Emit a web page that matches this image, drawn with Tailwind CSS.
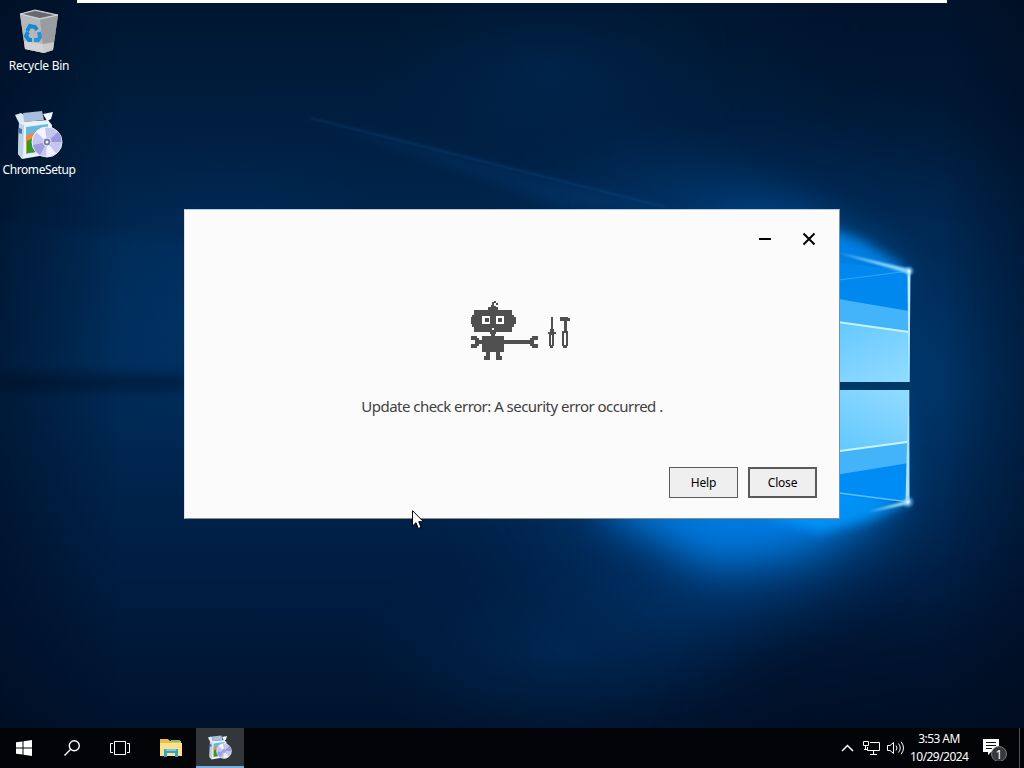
<!DOCTYPE html>
<html lang="en">
<head>
  <meta charset="UTF-8">
  <meta name="viewport" content="width=device-width, initial-scale=1.0">
  <title>Desktop</title>
  <script src="https://cdn.jsdelivr.net/npm/@tailwindcss/browser@4"></script>
</head>
<body class="overflow-hidden">
  <div class="relative flex flex-col w-[1024px] h-[768px] overflow-hidden bg-[#001533] font-['Noto_Sans','Open_Sans',sans-serif]">

    <!-- Wallpaper -->
    <svg class="absolute inset-0" width="1024" height="768" viewBox="0 0 1024 768" color-interpolation-filters="sRGB">
      <defs>
        <linearGradient id="base" x1="0" y1="0" x2="0" y2="1">
          <stop offset="0" stop-color="#001630"/>
          <stop offset=".25" stop-color="#002349"/>
          <stop offset=".5" stop-color="#002b57"/>
          <stop offset=".75" stop-color="#001d42"/>
          <stop offset="1" stop-color="#001027"/>
        </linearGradient>
        <radialGradient id="haze">
          <stop offset="0" stop-color="#0058a6" stop-opacity=".75"/>
          <stop offset=".5" stop-color="#004484" stop-opacity=".45"/>
          <stop offset="1" stop-color="#002a58" stop-opacity="0"/>
        </radialGradient>
        <linearGradient id="edge" x1="0" y1="0" x2="1" y2="0">
          <stop offset="0" stop-color="#000a1c" stop-opacity=".5"/>
          <stop offset=".12" stop-color="#000a1c" stop-opacity="0"/>
          <stop offset=".92" stop-color="#000a1c" stop-opacity="0"/>
          <stop offset="1" stop-color="#000a1c" stop-opacity=".4"/>
        </linearGradient>
        <linearGradient id="coneTop" gradientUnits="userSpaceOnUse" x1="908" y1="270" x2="560" y2="100">
          <stop offset="0" stop-color="#0098ff"/>
          <stop offset=".3" stop-color="#0064bf" stop-opacity=".8"/>
          <stop offset=".6" stop-color="#00509c" stop-opacity=".35"/>
          <stop offset="1" stop-color="#003a78" stop-opacity="0"/>
        </linearGradient>
        <linearGradient id="coneBottom" gradientUnits="userSpaceOnUse" x1="908" y1="503" x2="560" y2="680">
          <stop offset="0" stop-color="#00a0ff"/>
          <stop offset=".25" stop-color="#007ee8" stop-opacity=".9"/>
          <stop offset=".5" stop-color="#005cb0" stop-opacity=".6"/>
          <stop offset="1" stop-color="#003a78" stop-opacity="0"/>
        </linearGradient>
        <linearGradient id="paneTop" x1="0" y1="0" x2="1" y2="1">
          <stop offset="0" stop-color="#52c0ff"/>
          <stop offset="1" stop-color="#93dcff"/>
        </linearGradient>
        <linearGradient id="paneBottom" x1="0" y1="1" x2="1" y2="0">
          <stop offset="0" stop-color="#4fc0ff"/>
          <stop offset="1" stop-color="#92dbff"/>
        </linearGradient>
        <radialGradient id="flare">
          <stop offset="0" stop-color="#fff"/>
          <stop offset=".3" stop-color="#a8e4ff" stop-opacity=".7"/>
          <stop offset="1" stop-color="#35a5ff" stop-opacity="0"/>
        </radialGradient>
        <filter id="b1" x="-20%" y="-60%" width="140%" height="220%"><feGaussianBlur stdDeviation="1"/></filter>
        <filter id="b5" filterUnits="userSpaceOnUse" x="-50" y="-50" width="1124" height="868"><feGaussianBlur stdDeviation="6"/></filter>
        <filter id="b18" filterUnits="userSpaceOnUse" x="-50" y="-50" width="1124" height="868"><feGaussianBlur stdDeviation="20"/></filter>
        <filter id="b40" filterUnits="userSpaceOnUse" x="-200" y="-200" width="1424" height="1168"><feGaussianBlur stdDeviation="38"/></filter>
      </defs>
      <rect width="1024" height="768" fill="url(#base)"/>
      <ellipse cx="740" cy="380" rx="400" ry="270" fill="url(#haze)" opacity=".8"/>
      <ellipse cx="230" cy="300" rx="210" ry="180" fill="url(#haze)" opacity=".3"/>
      <ellipse cx="560" cy="650" rx="210" ry="110" fill="url(#haze)" opacity=".3"/>
      <ellipse cx="550" cy="70" rx="190" ry="100" fill="url(#haze)" opacity=".2"/>
      <!-- unlit corners -->
      <path d="M680 900 760 680 1200 590V900Z" fill="#000d22" opacity=".6" filter="url(#b40)"/>
      <path d="M760 -100 800 110 1200 190V-100Z" fill="#001027" opacity=".4" filter="url(#b40)"/>
      <!-- light beams -->
      <path d="M908 275 800 205 620 130 480 150 640 300Z" fill="url(#coneTop)" opacity=".6" filter="url(#b18)"/>
      <path d="M908 500 820 560 690 650 480 640 430 460Z" fill="url(#coneBottom)" opacity=".75" filter="url(#b40)"/>
      <path d="M890 500 800 548 710 565 600 510 640 400 880 400Z" fill="#008cff" opacity=".75" filter="url(#b18)"/>
      <path d="M909 270 860 240 810 222 700 225V310Z" fill="#0085ee" opacity=".9" filter="url(#b5)"/>
      <path d="M909 502 870 520 820 533 720 500V440Z" fill="#0098ff" opacity=".85" filter="url(#b5)"/>
      <path d="M310 118 665 207H560Z" fill="#0a5ba8" opacity=".15" filter="url(#b5)"/>
      <path d="M310 118 665 207" stroke="#1870bb" opacity=".4" filter="url(#b1)"/>
      <path d="M0 222 184 241V370H0Z" fill="#00386c" opacity=".25" filter="url(#b5)"/>
      <path d="M0 376H184V390H0Z" fill="#000d22" opacity=".5" filter="url(#b5)"/>
      <!-- window panes -->
      <path d="M780 256 910 271V382H780Z" fill="#0088ef"/>
      <path d="M780 390H909V502L780 490Z" fill="#008cf5"/>
      <path d="M780 289 909 311V382H780Z" fill="#43b4fa"/>
      <path d="M780 316 909 332V382H780Z" fill="url(#paneTop)"/>
      <path d="M780 390H909V463L780 484Z" fill="#43b4fa"/>
      <path d="M780 390H909V442L780 458Z" fill="url(#paneBottom)"/>
      <path d="M780 314 909 332" stroke="#c7f3ff" stroke-width="2"/>
      <path d="M780 459 907 442" stroke="#c7f3ff" stroke-width="2"/>
      <path d="M780 382H911V390H780Z" fill="#003866"/>
      <path d="M839 280 909 271" stroke="#39adfa" opacity=".8"/>
      <path d="M839 493 909 502" stroke="#6ccfff" stroke-width="1.5" opacity=".8"/>
      <path d="M839 253 910 269 910 274Z" fill="#8edcff" filter="url(#b1)"/>
      <path d="M868 512 909 500 909 504Z" fill="#a4e5ff" filter="url(#b1)"/>
      <path d="M907.5 271H910.5L909.5 382H908.5Z" fill="#b5edff"/>
      <path d="M908.3 390H909.3L909.5 502H905.5Z" fill="#a0e4ff"/>
      <circle cx="909" cy="271" r="6" fill="url(#flare)"/>
      <circle cx="908" cy="502" r="7" fill="url(#flare)"/>
      <rect width="1024" height="768" fill="url(#edge)"/>
    </svg>

    <div class="absolute left-[77px] top-0 w-[870px] h-[3px] bg-white"></div>

    <!-- Desktop icons -->
    <main class="relative flex-1">
      <div class="flex flex-col w-[78px] pt-2 text-white text-[12px] leading-4 text-center">
        <div class="flex flex-col items-center h-[104px]">
          <svg width="48" height="48" viewBox="0 0 48 48">
            <path d="M5 6 20 2 43 7 38 42 29 45 10 41Z" fill="#a9adb0"/>
            <path d="M5 6 25 11 29 45 10 41Z" fill="#b4b8bc"/>
            <path d="M25 11 43 7 38 42 29 45Z" fill="#999da1"/>
            <path d="M8 6 20 3 39 7 25 10Z" fill="#64696e"/>
            <path d="M5 6 20 2 43 7 25 11Z" fill="none" stroke="#d3d7da"/>
            <path d="M9 33 28 36 39 34 38 42 29 45 10 41Z" fill="#dedddb" opacity=".7"/>
            <path d="M12 23 15 18 20 19 22 22" fill="none" stroke="#1688d0" stroke-width="4"/>
            <path d="M13 24 11 28 14 32 17 32" fill="none" stroke="#1688d0" stroke-width="4"/>
            <path d="M24 24 25 29 23 32 19 32" fill="none" stroke="#2792d8" stroke-width="4"/>
          </svg>
          <span class="whitespace-nowrap mt-[2px] tracking-[-0.25px]">Recycle Bin</span>
        </div>
        <div class="flex flex-col items-center -mt-[2px]">
          <svg class="mr-[2px]" width="50" height="50" viewBox="0 0 50 50">
            <defs>
              <symbol id="setup" viewBox="0 0 50 50">
                <path d="M6 12 35 10 39 15 38 44 9 49 5 44Z" fill="#e9f1fa"/>
                <path d="M2 5 8 3 11 5 11 12 6 13Z" fill="#dce9f5"/>
                <path d="M10 3 29 1 31 10 11 12Z" fill="#a7bddb"/>
                <path d="M30 4 40 2 38 9 34 11Z" fill="#f2f8ff"/>
                <path d="M6 13 11 15 10 48 5 44Z" fill="#bfd1e7"/>
                <path d="M13 17 35 14V40L13 44Z" fill="#66b8de"/>
                <path d="M13 26 21 22V42L13 43Z" fill="#ef8a3c"/>
                <path d="M14 31 23 27V42L14 43Z" fill="#2f9b27"/>
                <path d="M6 18 9 19V24L6 23Z" fill="#3b78be"/>
                <circle cx="34" cy="32" r="15" fill="#c5c5ee" stroke="#f1f2ff"/>
                <path d="M34 32 23 22A15 15 0 0 1 32 17.500Z" fill="#f4f4ff"/>
                <path d="M34 32 43 43.500A15 15 0 0 1 33 46.500Z" fill="#eff0ff"/>
                <path d="M34 32 45 22A15 15 0 0 1 48.500 32Z" fill="#9b99dc"/>
                <path d="M34 32 20 35A15 15 0 0 0 27 45Z" fill="#9c9de0"/>
                <circle cx="34" cy="32" r="4" fill="#7378ac" stroke="#e7e7fa"/>
                <circle cx="34" cy="32" r="1.500" fill="#f5f5ff"/>
              </symbol>
            </defs>
            <use href="#setup" width="50" height="50"/>
          </svg>
          <span class="whitespace-nowrap mt-[2px] tracking-[-0.4px]">ChromeSetup</span>
        </div>
      </div>
    </main>

    <!-- Installer window -->
    <section class="absolute left-[184px] top-[209px] w-[656px] h-[310px] flex flex-col items-center bg-[#fbfbfb] border border-t-[#b5cbe0] border-l-[#d5e1ec] border-r-[#8b8c88] border-b-[#8b8c88]">
      <div class="flex items-center justify-end w-full h-[58px] pr-[23px] gap-[30px]">
        <svg width="14" height="14" viewBox="0 0 14 14"><path d="M1 7H13" stroke="#000" stroke-width="2"/></svg>
        <svg width="14" height="14" viewBox="0 0 14 14"><path d="M1.500 1.500 12.500 12.500M12.500 1.500 1.500 12.500" stroke="#000" stroke-width="2"/></svg>
      </div>
      <div class="flex justify-center w-full h-[128px] pt-[30px] pl-[18px]">
        <svg width="104" height="64" viewBox="469 298 104 64" shape-rendering="crispEdges">
          <g fill="#505050">
            <path d="M491 305H492V302H494V301H496V303H494V306H496V307H498V310H512V315H514V317H516V324H514V327H512V332H496V334H495V336H504V340H530V338H532V336H538V340H534V344H538V348H532V346H530V344H504V352H500V356H502V360H496V352H490V360H484V356H486V352H482V344H479V346H477V348H471V344H475V340H471V336H477V338H479V340H482V336H491V334H490V332H474V327H472V324H471V317H472V315H474V310H488V307H491ZM496 303H498V305H496Z"/>
            <!-- screwdriver and hammer -->
            <path d="M551 317H553V329H554V332H556V334H554V346H553V348H550V346H549V334H548V332H550V329H551Z"/>
            <path d="M560 317H568V318H570V321H567V331H568V346H567V348H563V346H562V331H564V321H560Z"/>
          </g>
          <path d="M482 316H490V324H482ZM496 316H504V324H496ZM492 328H494V330H492ZM551 335H552V345H551ZM564 333H566V345H564Z" fill="#fff"/>
          <path d="M485 318H489V322H485ZM498 318H502V322H498Z" fill="#505050"/>
        </svg>
      </div>
      <p class="text-[15px] leading-5 text-[#404040] whitespace-nowrap tracking-[-0.53px]">Update check error: A security error occurred .</p>
      <div class="flex justify-end gap-2.5 w-full mt-auto pr-[22px] pb-5 text-[12px] text-black tracking-[-0.2px]">
        <button class="w-[69px] h-[31px] border border-[#5a5a5a] bg-[#efefef]">Help</button>
        <button class="w-[69px] h-[31px] border-2 border-[#5a5a5a] bg-[#efefef]">Close</button>
      </div>
    </section>

    <!-- Taskbar -->
    <footer class="relative flex items-center justify-between h-10 bg-[#020408] text-white">
      <div class="flex h-full">
        <div class="flex items-center justify-center w-12">
          <svg width="16" height="16" viewBox="0 0 16 16" fill="#fff"><path d="M0 2.300 6.500 1.400V7.500H0ZM7.500 1.200 16 0V7.500H7.500ZM0 8.500H6.500V14.600L0 13.700ZM7.500 8.500H16V16L7.500 14.800Z"/></svg>
        </div>
        <div class="flex items-center justify-center w-12">
          <svg width="16" height="16" viewBox="0 0 16 16" fill="none" stroke="#fff" stroke-width="1.400"><circle cx="10.300" cy="5.700" r="5"/><path d="M6.700 9.300.5 15.500"/></svg>
        </div>
        <div class="flex items-center justify-center w-12">
          <svg width="20" height="16" viewBox="0 0 20 16" fill="none" stroke="#fff"><path d="M4.500 1.500H15.500V14.500H4.500ZM3 3.500H.5V12.500H3M17 3.500H19.500V12.500H17"/></svg>
        </div>
        <div class="flex items-center justify-center w-[52px] pl-[2px]">
          <svg width="22" height="18" viewBox="0 0 22 18">
            <path d="M0 0H8L10 2H21V17H0Z" fill="#e9bd51"/>
            <path d="M0 4H22V17H0Z" fill="#ffe08c"/>
            <path d="M11 1H20V3H11Z" fill="#80c56f"/>
            <path d="M4 10H18V18H15V14H7V18H4Z" fill="#34a2cd"/>
            <path d="M6 10H16V12H6Z" fill="#75c9df"/>
          </svg>
        </div>
        <div class="flex items-center justify-center w-12 bg-[#34373a] border-b-2 border-[#76b0df]">
          <svg class="mr-[2px]" width="25" height="25"><use href="#setup" width="25" height="25"/></svg>
        </div>
      </div>
      <div class="flex items-center h-full">
        <svg class="mr-[9px]" width="13" height="8" viewBox="0 0 13 8" fill="none" stroke="#fff" stroke-width="1.500"><path d="M1 7 6.500 1.500 12 7"/></svg>
        <svg class="mr-[7px]" width="17" height="14" viewBox="0 0 17 14" fill="none" stroke="#fff"><path d="M7 1.500H16.500V9.500H4.500V6M10.500 9.500V13M7 13.500H14M.5.500H5.500V4.500H.5ZM2.500 4.500V8M1 8.500H4"/></svg>
        <svg class="mr-[5px]" width="18" height="14" viewBox="0 0 18 14" fill="none" stroke="#fff"><path d="M.5 4.500H3L6.500 1.500V12.500L3 9.500H.5ZM9 4.500Q11 7 9 9.500M11.500 2.500Q15 7 11.500 11.500M14 .7Q19 7 14 13.300"/></svg>
        <div class="w-[58px] text-[12px] leading-[18px] text-center whitespace-nowrap tracking-[-0.55px]">
          <div>3:53 AM</div>
          <div>10/29/2024</div>
        </div>
        <svg class="ml-[14px]" width="26" height="26" viewBox="0 0 26 26">
          <path d="M1 4H17V17H9L6 20V17H1Z" fill="#fff"/>
          <path d="M4 7.500H14M4 10.500H14M4 13.500H10" stroke="#111"/>
          <circle cx="17" cy="19" r="7.500" fill="#35383c" stroke="#75787b"/>
          <text x="17" y="23.500" text-anchor="middle" fill="#fff" font-size="12">1</text>
        </svg>
        <div class="w-px h-full ml-[11px] mr-1 bg-[#4d5156]"></div>
      </div>
    </footer>

    <!-- Mouse pointer -->
    <svg class="absolute left-[412px] top-[510px]" width="12" height="20" viewBox="0 0 12 20"><path d="M.5.700V16L4 12.700 6.300 18.500 9 17.300 6.700 11.700H11.500Z" fill="#fff" stroke="#000"/></svg>
  </div>
</body>
</html>
